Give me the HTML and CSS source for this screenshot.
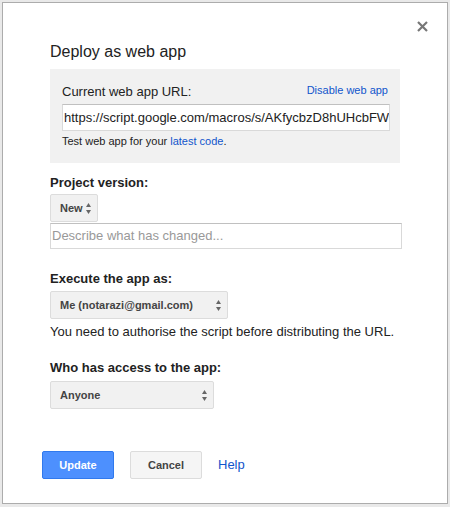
FILE: index.html
```html
<!DOCTYPE html>
<html>
<head>
<meta charset="utf-8">
<link rel="stylesheet" href="styles.css">
</head>
<body>
<div class="dialog">
  <button class="close" aria-label="Close"><svg width="11" height="11" viewBox="0 0 11 11"><path d="M1 1L10 10M10 1L1 10" stroke="#777" stroke-width="2.2" fill="none"/></svg></button>
  <h1 class="title">Deploy as web app</h1>
  <div class="url-box">
    <div class="url-head"><span class="url-label">Current web app URL:</span><a class="link small">Disable web app</a></div>
    <div class="url-input">https://script.google.com/macros/s/AKfycbzD8hUHcbFWqRm3tLx/exec</div>
    <div class="hint">Test web app for your <a class="link">latest code</a>.</div>
  </div>

  <div class="label label-first">Project version:</div>
  <div class="select select-new"><span>New</span><svg class="arrows" width="5" height="11" viewBox="0 0 5 11"><path d="M2.5 0L5 4H0Z M2.5 11L0 7H5Z" fill="#666"/></svg></div>
  <div class="text-input">Describe what has changed...</div>

  <div class="label label-exec">Execute the app as:</div>
  <div class="select select-me"><span>Me (notarazi@gmail.com)</span><svg class="arrows" width="5" height="11" viewBox="0 0 5 11"><path d="M2.5 0L5 4H0Z M2.5 11L0 7H5Z" fill="#666"/></svg></div>
  <div class="note">You need to authorise the script before distributing the URL.</div>

  <div class="label label-who">Who has access to the app:</div>
  <div class="select select-anyone"><span>Anyone</span><svg class="arrows" width="5" height="11" viewBox="0 0 5 11"><path d="M2.5 0L5 4H0Z M2.5 11L0 7H5Z" fill="#666"/></svg></div>

  <div class="buttons">
    <button class="btn btn-primary">Update</button>
    <button class="btn btn-default">Cancel</button>
    <a class="link help">Help</a>
  </div>
</div>
</body>
</html>
```
FILE: styles.css
```css
html, body {
  margin: 0;
  padding: 0;
}
body {
  background: #e9e9e9;
  font-family: "Liberation Sans", Arial, sans-serif;
  color: #222;
  overflow: hidden;
}
.dialog {
  position: relative;
  box-sizing: border-box;
  margin: 2px;
  width: 446px;
  height: 502px;
  background: #fff;
  border: 1px solid #acacac;
  padding: 39px 0 0 47px;
}
.close {
  position: absolute;
  top: 18px;
  right: 19px;
  width: 11px;
  height: 11px;
  padding: 0;
  border: 0;
  background: none;
  display: block;
}
.close svg {
  display: block;
}
.title {
  margin: 0;
  font-size: 16px;
  line-height: 20px;
  font-weight: normal;
  color: #222;
}
.url-box {
  margin-top: 7px;
  width: 350px;
  box-sizing: border-box;
  background: #f1f1f1;
  padding: 15px 12px 15px 12px;
}
.url-head {
  display: flex;
  justify-content: space-between;
  align-items: flex-start;
}
.url-label {
  font-size: 13px;
  line-height: 16px;
}
.link {
  color: #15c;
  text-decoration: none;
}
.small {
  font-size: 11px;
  line-height: 13px;
}
.url-input {
  margin-top: 4px;
  width: 328px;
  height: 27px;
  box-sizing: border-box;
  border: 1px solid #d9d9d9;
  border-top-color: #c0c0c0;
  background: #fff;
  font-size: 13px;
  line-height: 25px;
  padding: 0 1px;
  white-space: nowrap;
  overflow: hidden;
}
.hint {
  margin-top: 4px;
  font-size: 11px;
  line-height: 13px;
}
.label {
  font-weight: bold;
  font-size: 13px;
  line-height: 16px;
}
.label-first { margin-top: 12px; }
.label-exec { margin-top: 22px; }
.label-who { margin-top: 20px; }
.select {
  display: flex;
  align-items: center;
  justify-content: space-between;
  box-sizing: border-box;
  height: 28px;
  background: #f1f1f1;
  border: 1px solid #dcdcdc;
  border-radius: 2px;
  padding: 0 6px 0 9px;
  font-size: 11px;
  font-weight: bold;
  color: #444;
}
.arrows {
  display: block;
  flex: none;
}
.select-new {
  margin-top: 3px;
  width: 48px;
}
.select-me {
  margin-top: 4px;
  width: 178px;
}
.select-anyone {
  margin-top: 5px;
  width: 164px;
}
.text-input {
  margin-top: 1px;
  width: 352px;
  height: 26px;
  box-sizing: border-box;
  border: 1px solid #d9d9d9;
  border-top-color: #c0c0c0;
  font-size: 13px;
  line-height: 24px;
  padding: 0 1px;
  color: #999;
}
.note {
  margin-top: 5px;
  font-size: 13px;
  line-height: 16px;
}
.buttons {
  display: flex;
  align-items: center;
  margin-top: 42px;
  margin-left: -8px;
}
.btn {
  box-sizing: border-box;
  width: 72px;
  height: 28px;
  border-radius: 2px;
  font-family: "Liberation Sans", Arial, sans-serif;
  font-size: 11px;
  font-weight: bold;
  padding: 0;
}
.btn-primary {
  background: #4d90fe;
  border: 1px solid #3079ed;
  color: #fff;
}
.btn-default {
  margin-left: 16px;
  background: #f5f5f5;
  border: 1px solid #dcdcdc;
  color: #444;
}
.help {
  margin-left: 16px;
  font-size: 13px;
  line-height: 16px;
}
```
